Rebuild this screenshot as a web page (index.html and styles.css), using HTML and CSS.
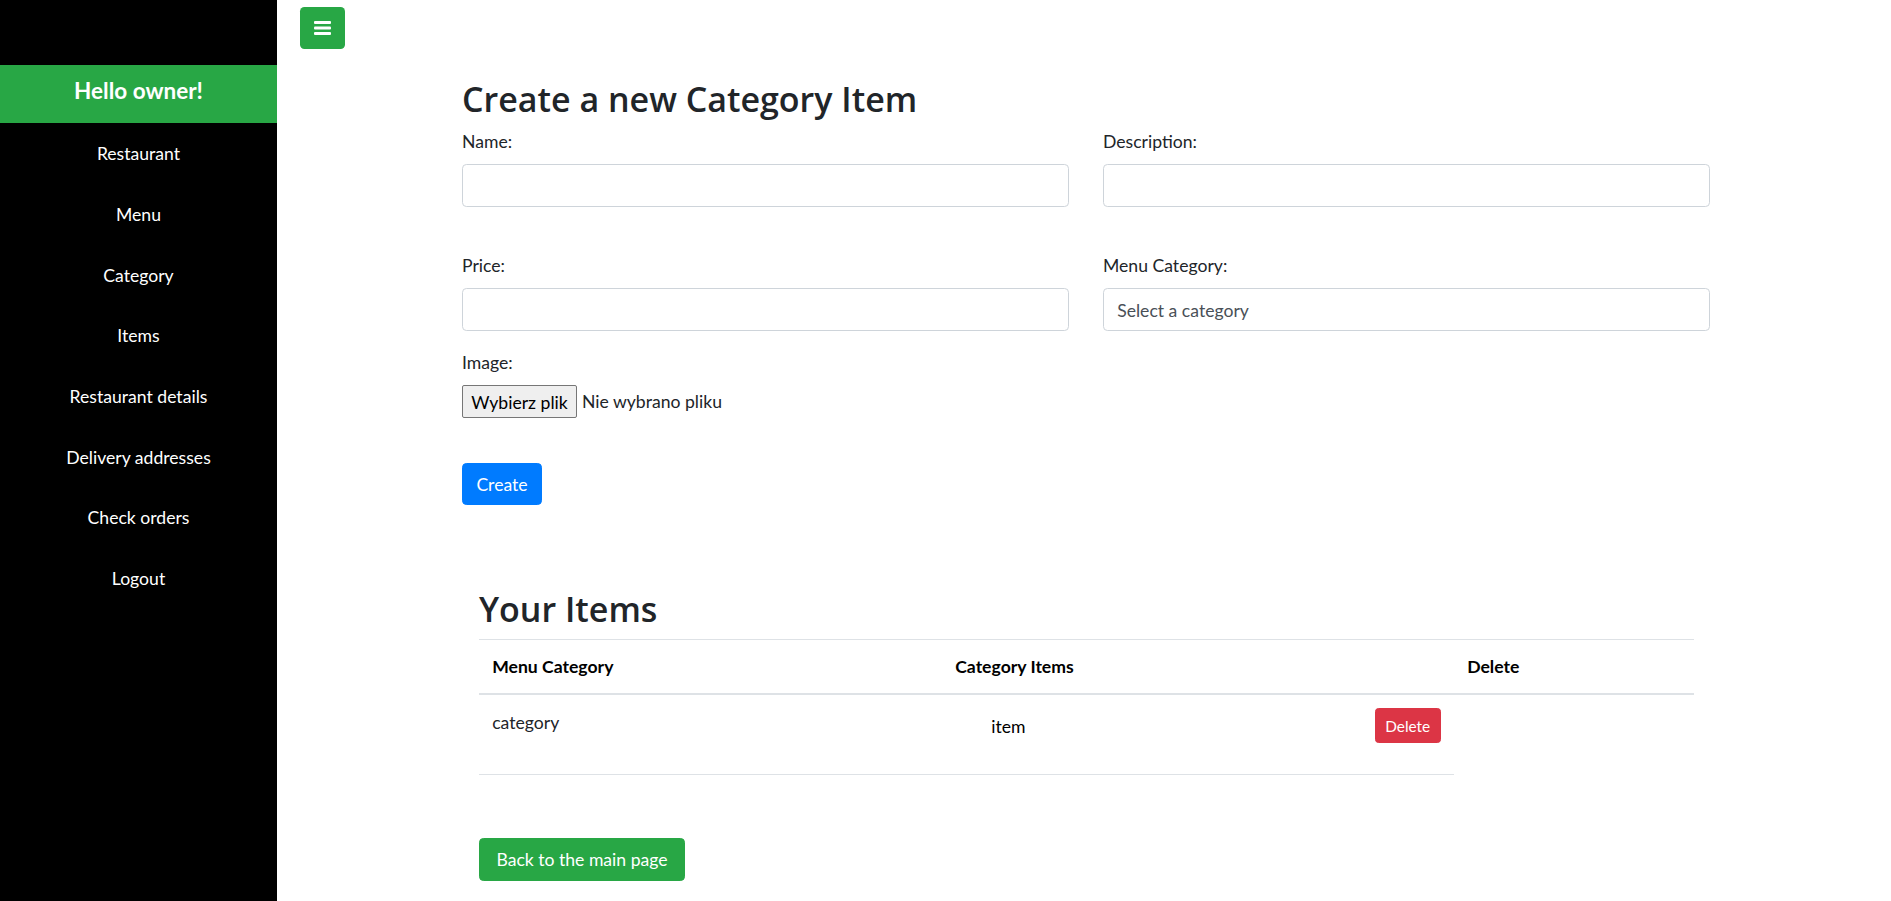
FILE: index.html
```html
<!DOCTYPE html>
<html lang="en">
<head>
<meta charset="utf-8">
<title>Create a new Category Item</title>
<link rel="stylesheet" href="styles.css">
</head>
<body>
<aside class="sidebar">
  <div class="sidebar-header">Hello owner!</div>
  <nav class="sidebar-nav">
    <a class="nav-link" href="#">Restaurant</a>
    <a class="nav-link" href="#">Menu</a>
    <a class="nav-link" href="#">Category</a>
    <a class="nav-link" href="#">Items</a>
    <a class="nav-link" href="#">Restaurant details</a>
    <a class="nav-link" href="#">Delivery addresses</a>
    <a class="nav-link" href="#">Check orders</a>
    <a class="nav-link" href="#">Logout</a>
  </nav>
</aside>
<main class="content">
  <div class="topbar">
    <button class="toggle-btn" type="button" aria-label="Toggle sidebar">
      <svg width="17" height="14" viewBox="0 0 17 14" aria-hidden="true">
        <rect x="0" y="0" width="17" height="3" rx="1" fill="#fff"/>
        <rect x="0" y="5.5" width="17" height="3" rx="1" fill="#fff"/>
        <rect x="0" y="11" width="17" height="3" rx="1" fill="#fff"/>
      </svg>
    </button>
  </div>
  <div class="container">
    <h2 class="page-title">Create a new Category Item</h2>
    <form class="item-form">
      <div class="form-grid">
        <div class="form-group">
          <label class="form-label">Name:</label>
          <input class="form-control" type="text">
        </div>
        <div class="form-group">
          <label class="form-label">Description:</label>
          <input class="form-control" type="text">
        </div>
        <div class="form-group">
          <label class="form-label">Price:</label>
          <input class="form-control" type="text">
        </div>
        <div class="form-group">
          <label class="form-label">Menu Category:</label>
          <select class="form-control form-select">
            <option>Select a category</option>
          </select>
        </div>
      </div>
      <div class="image-group">
        <label class="form-label">Image:</label>
        <div class="file-row">
          <button class="file-btn" type="button">Wybierz plik</button>
          <span class="file-name">Nie wybrano pliku</span>
        </div>
      </div>
      <button class="btn btn-primary create-btn" type="button">Create</button>
    </form>

    <section class="items-section">
      <h2 class="page-title">Your Items</h2>
      <table class="items-table">
        <colgroup>
          <col class="col-cat">
          <col class="col-items">
          <col class="col-del">
        </colgroup>
        <thead>
          <tr>
            <th>Menu Category</th>
            <th>Category Items</th>
            <th>Delete</th>
          </tr>
        </thead>
        <tbody>
          <tr>
            <td class="cat-cell">category</td>
            <td>
              <div class="item-row">
                <span class="item-name">item</span>
                <button class="btn btn-danger btn-sm" type="button">Delete</button>
              </div>
            </td>
          </tr>
        </tbody>
      </table>
      <button class="btn btn-success back-btn" type="button">Back to the main page</button>
    </section>
  </div>
</main>
</body>
</html>
```
FILE: styles.css
```css
* { box-sizing: border-box; }

html, body { height: 100%; }

body {
  margin: 0;
  display: flex;
  overflow: hidden;
  font-family: "Lato", "Open Sans", sans-serif;
  font-size: 17.6px;
  line-height: 1.5;
  color: #212529;
  background: #fff;
}

/* Sidebar */
.sidebar {
  width: 277px;
  flex: 0 0 277px;
  min-height: 100vh;
  background: #000;
  padding-top: 65px;
}

.sidebar-header {
  height: 58px;
  background: #28a745;
  color: #fff;
  font-weight: 700;
  font-size: 22.5px;
  line-height: 27px;
  text-align: center;
  padding-top: 12px;
}

.sidebar-nav {
  display: flex;
  flex-direction: column;
}

.nav-link {
  display: block;
  height: 60.7px;
  padding: 18.3px 0 16px;
  line-height: 26.4px;
  text-align: center;
  color: #fff;
  text-decoration: none;
}

/* Main */
.content {
  flex: 1;
  min-width: 0;
  padding-top: 7px;
}

.topbar {
  padding-left: 23px;
}

.toggle-btn {
  display: flex;
  align-items: center;
  justify-content: center;
  width: 45px;
  height: 42px;
  padding: 0;
  border: 0;
  border-radius: 4.4px;
  background: #28a745;
}

.container {
  width: 1248px;
  margin: 0 181px 0 auto;
}

.page-title {
  font-family: "Open Sans", "Lato", sans-serif;
  font-weight: 600;
  font-size: 34px;
  line-height: 42.24px;
  margin: 29px 0 7.8px;
  color: #212529;
}

.form-grid {
  display: grid;
  grid-template-columns: 1fr 1fr;
  column-gap: 34px;
  row-gap: 45px;
}

.form-label {
  display: block;
  padding-top: 1.2px;
  margin-bottom: 8.4px;
}

.form-control {
  display: block;
  width: 100%;
  height: 43px;
  padding: 7.6px 13.2px 5.6px;
  font-family: inherit;
  font-size: 17.6px;
  color: #495057;
  background: #fff;
  border: 1px solid #ced4da;
  border-radius: 4.4px;
}

.form-select {
  appearance: none;
  -webkit-appearance: none;
}

.image-group {
  margin-top: 17.6px;
}

.image-group .form-label {
  margin-bottom: 8.8px;
}

.file-row {
  display: flex;
  align-items: center;
  gap: 5px;
  height: 33px;
}

.file-btn {
  height: 33px;
  width: 115px;
  padding: 2px 0 0;
  font-family: inherit;
  font-size: 17.6px;
  color: #000;
  background: #efefef;
  border: 1px solid #767676;
  border-radius: 2px;
}

.file-name {
  color: #212529;
  padding-top: 2px;
}

.btn {
  display: inline-block;
  font-family: inherit;
  font-size: 17.6px;
  line-height: 1.5;
  padding: 7.8px 13.2px 5.4px;
  border: 1px solid transparent;
  border-radius: 4.4px;
  color: #fff;
  cursor: pointer;
}

.btn-primary {
  background: #007bff;
  border-color: #007bff;
}

.btn-success {
  background: #28a745;
  border-color: #28a745;
}

.btn-danger {
  background: #dc3545;
  border-color: #dc3545;
}

.btn-sm {
  font-size: 15.4px;
  padding: 5.4px 9.6px 3.4px;
  border-radius: 3.5px;
  height: 35px;
}

.create-btn {
  margin-top: 45px;
  width: 80px;
  height: 42px;
}

/* Items */
.items-section {
  padding: 0 16px 0 17px;
}

.items-section .page-title {
  margin: 83px 0 8.6px;
}

.items-table {
  width: 100%;
  border-collapse: collapse;
  color: #212529;
}

.col-cat { width: 463px; }
.col-items { width: 512px; }

.items-table th {
  text-align: left;
  font-weight: 700;
  color: #000;
  padding: 14.4px 13.2px 12px;
  line-height: 26.4px;
  border-top: 1px solid #dee2e6;
  border-bottom: 2px solid #dee2e6;
}

.items-table td {
  vertical-align: top;
  padding: 13.2px;
  line-height: 26.4px;
  border-bottom: 1px solid #dee2e6;
}

.items-table td.cat-cell {
  padding-top: 15px;
}

.item-row {
  display: flex;
  align-items: center;
  justify-content: space-between;
  height: 35px;
  margin-bottom: 17.6px;
}

.item-name {
  padding-left: 36px;
  padding-top: 4px;
  color: #000;
}

.back-btn {
  margin-top: 63px;
  width: 206px;
  height: 43px;
  padding: 7.8px 0 5.4px;
  text-align: center;
}
```
